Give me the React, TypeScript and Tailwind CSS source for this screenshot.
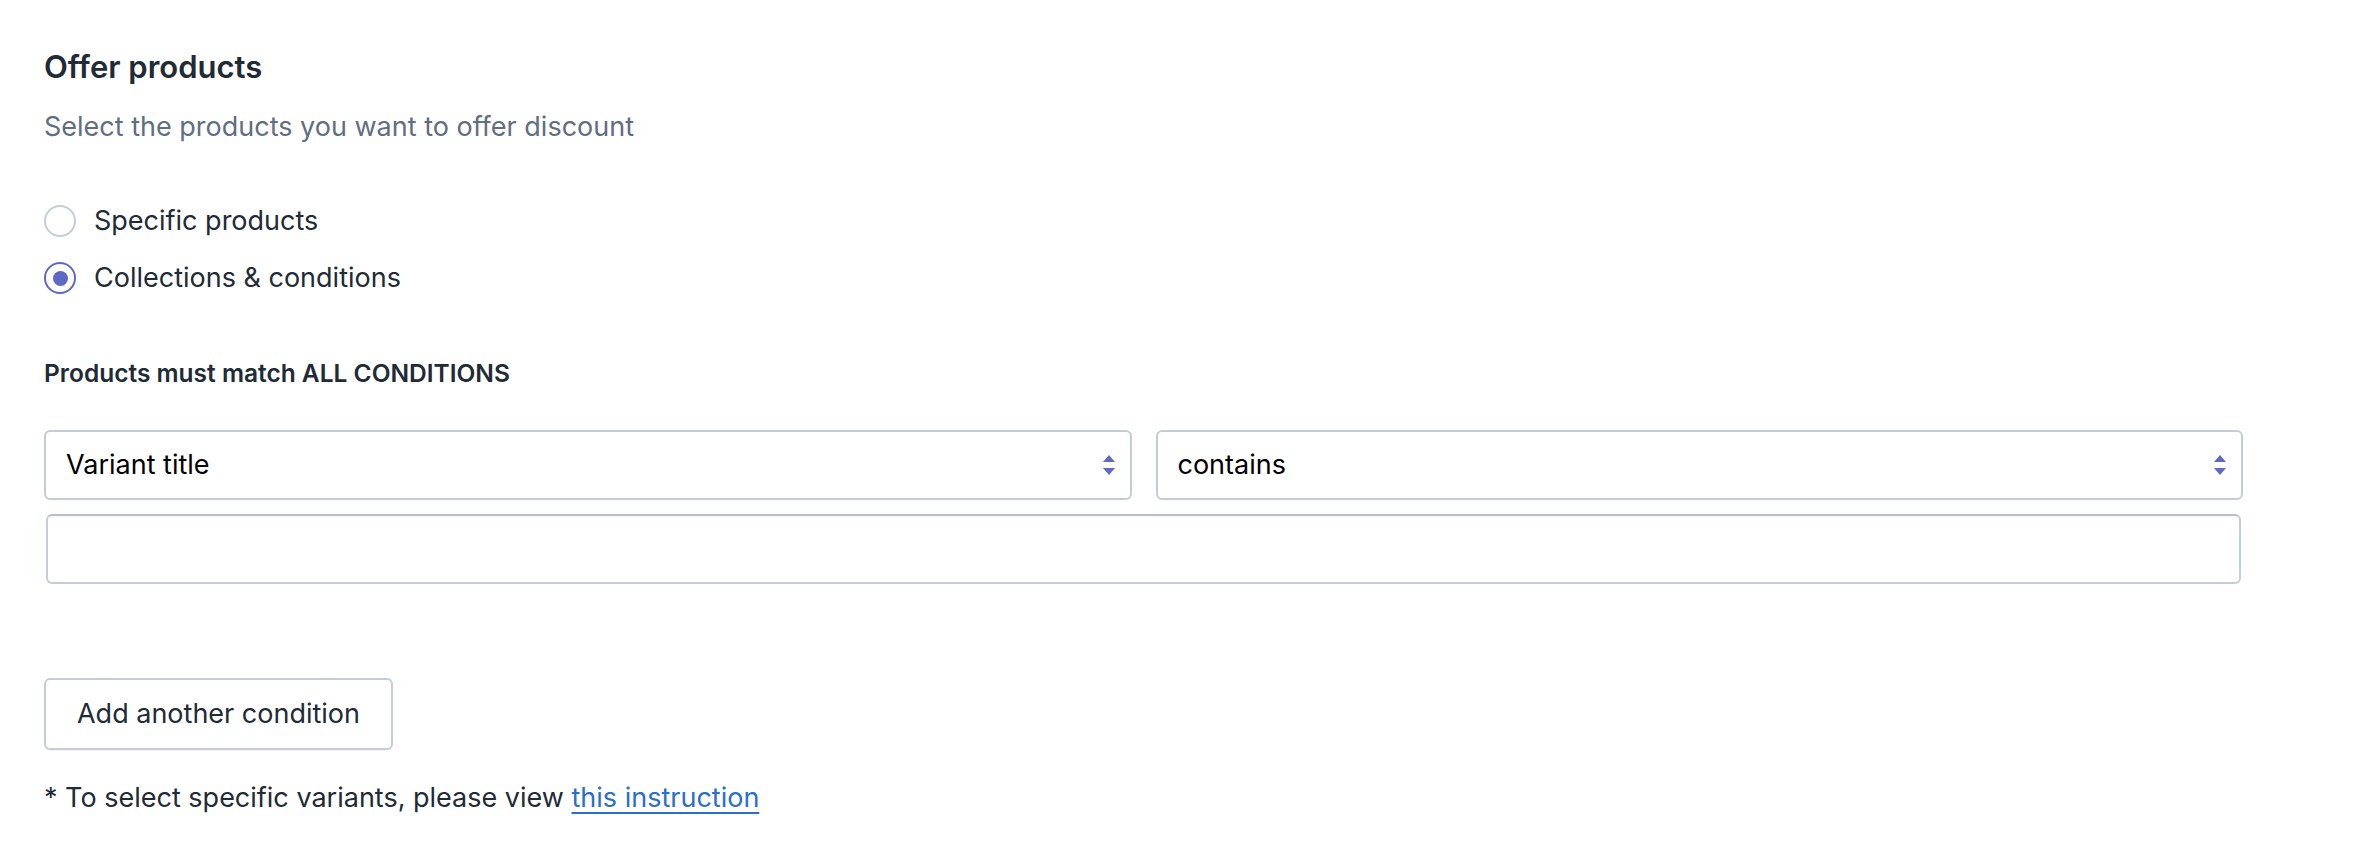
const SelectArrows = () => (
  <svg width="14" height="24" viewBox="0 0 14 24" className="shrink-0">
    <path d="M7 2 L13 9 L1 9 Z" fill="#5c6ac4" />
    <path d="M1 15 L13 15 L7 22 Z" fill="#5c6ac4" />
  </svg>
);

const Radio = ({ checked, label }: { checked: boolean; label: string }) => (
  <label className="flex items-center h-[40px] gap-[18px] cursor-pointer">
    <span
      className={
        checked
          ? "w-[32px] h-[32px] rounded-full border-2 border-[#5c6ac4] flex items-center justify-center"
          : "w-[32px] h-[32px] rounded-full border-2 border-[#c4cdd5] flex items-center justify-center"
      }
    >
      {checked && <span className="w-[15px] h-[15px] rounded-full bg-[#5c6ac4]" />}
    </span>
    <span className="text-[27px] leading-[36px] text-[#212b36]">{label}</span>
  </label>
);

const FakeSelect = ({ value }: { value: string }) => (
  <div className="flex-1 h-[70px] border-2 border-[#c4cdd5] rounded-[6px] bg-white flex items-center justify-between pl-[20px] pr-[14px]">
    <span className="text-[27px] leading-[36px] text-black">{value}</span>
    <SelectArrows />
  </div>
);

export default function App() {
  return (
    <div className="min-h-screen bg-white font-['Inter',sans-serif] pl-[44px] pt-[49px] pb-10">
      <div className="w-[2199px]">
        <h2 className="text-[31px] leading-[36px] font-semibold text-[#212b36]">
          Offer products
        </h2>
        <p className="mt-[24px] text-[27px] leading-[36px] text-[#5f6e82]">
          Select the products you want to offer discount
        </p>

        <div className="mt-[56px] flex flex-col gap-[17px]">
          <Radio checked={false} label="Specific products" />
          <Radio checked={true} label="Collections & conditions" />
        </div>

        <p className="mt-[59px] text-[24.5px] leading-[32px] font-semibold text-[#212b36]">
          Products must match ALL CONDITIONS
        </p>

        <div className="mt-[41px] flex gap-[24px]">
          <FakeSelect value="Variant title" />
          <FakeSelect value="contains" />
        </div>
        <div className="mt-[14px] mx-[2px]">
          <input
            type="text"
            className="w-full h-[70px] border-2 border-[#c4cdd5] border-t-[#b7c0c9] rounded-[6px] px-[20px] text-[27px] outline-none shadow-[inset_0_1px_0_rgba(99,115,129,0.05)]"
          />
        </div>

        <button className="mt-[94px] h-[72px] w-[349px] border-2 border-[#c4cdd5] rounded-[6px] bg-white text-[27px] leading-[36px] text-[#212b36] shadow-[0_1px_0_rgba(22,29,37,0.05)]">
          Add another condition
        </button>

        <p className="mt-[30px] text-[27px] leading-[36px] text-[#212b36]">
          * To select specific variants, please view{" "}
          <a href="#" className="text-[#2c6ecb] underline underline-offset-[5px]">
            this instruction
          </a>
        </p>
      </div>
    </div>
  );
}
